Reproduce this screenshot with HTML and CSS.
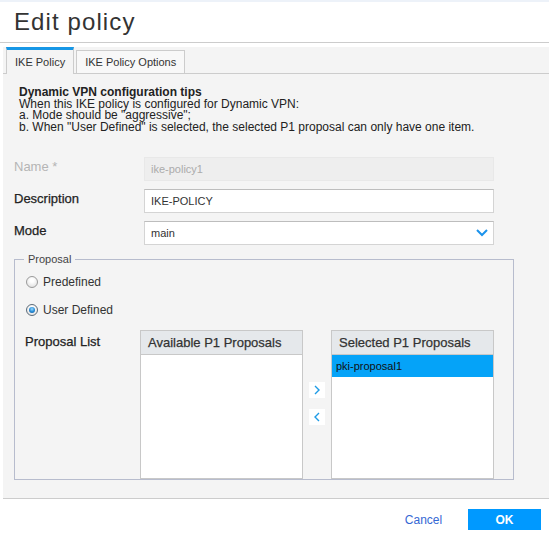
FILE: index.html
```html
<!DOCTYPE html>
<html lang="en">
<head>
    <meta charset="UTF-8">
    <meta name="viewport" content="width=device-width, initial-scale=1.0">
    <title>Edit policy</title>
    <link rel="stylesheet" href="styles.css">
</head>
<body>

    <div class="dialog-title">Edit policy</div>

    <div class="panel">
        <div class="tabs">
            <div class="tab active">IKE Policy</div>
            <div class="tab">IKE Policy Options</div>
        </div>

        <div class="panel-body">
            <div class="tips">
                <div class="tips-title">Dynamic VPN configuration tips</div>
                <div>When this IKE policy is configured for Dynamic VPN:</div>
                <div>a. Mode should be "aggressive";</div>
                <div>b. When "User Defined" is selected, the selected P1 proposal can only have one item.</div>
            </div>

            <div class="form-row disabled">
                <label>Name *</label>
                <input class="field" type="text" value="ike-policy1" disabled>
            </div>
            <div class="form-row">
                <label>Description</label>
                <input class="field" type="text" value="IKE-POLICY">
            </div>
            <div class="form-row">
                <label>Mode</label>
                <div class="field select">
                    <span>main</span>
                    <svg width="12" height="8" viewBox="0 0 12 8"><polyline points="1,1 6,6 11,1" fill="none" stroke="#1b93ec" stroke-width="2"/></svg>
                </div>
            </div>

            <fieldset class="proposal">
                <legend>Proposal</legend>
                <div class="radio-row"><span class="radio"></span>Predefined</div>
                <div class="radio-row"><span class="radio checked"></span>User Defined</div>

                <div class="list-row">
                    <div class="list-label">Proposal List</div>
                    <div class="list-box">
                        <div class="list-head">Available P1 Proposals</div>
                    </div>
                    <div class="list-arrows">
                        <span class="arrow-btn"><svg width="6" height="10" viewBox="0 0 6 10"><polyline points="1,1 5,5 1,9" fill="none" stroke="#1d9be6" stroke-width="1.4"/></svg></span>
                        <span class="arrow-btn"><svg width="6" height="10" viewBox="0 0 6 10"><polyline points="5,1 1,5 5,9" fill="none" stroke="#1d9be6" stroke-width="1.4"/></svg></span>
                    </div>
                    <div class="list-box">
                        <div class="list-head">Selected P1 Proposals</div>
                        <div class="list-item selected">pki-proposal1</div>
                    </div>
                </div>
            </fieldset>
        </div>
    </div>

    <div class="dialog-footer">
        <button class="btn btn-link">Cancel</button>
        <button class="btn btn-primary">OK</button>
    </div>

</body>
</html>
```

FILE: styles.css
```css
body {
    font-family: 'Liberation Sans', Arial, sans-serif;
    background-color: #ffffff;
    margin: 0;
    padding: 0;
    color: #333333;
}

.dialog-title {
    border-top: 2px solid #edf2f9; /* pale strip above the header */
    border-bottom: 1px solid #cccccc;
    padding: 6px 14px;
    font-size: 24px;
    line-height: 28px;
    letter-spacing: 1.1px;
    color: #333333;
}

.panel {
    margin: 4px 0 0 3px;
    background-color: #f4f4f4;
    border-bottom: 1px solid #cccccc;
}

/* tab strip */
.tabs {
    display: flex;
    align-items: flex-end;
    gap: 2px;
    height: 26px;
    padding-left: 3px;
    border-bottom: 1px solid #cccccc;
}

.tab {
    display: flex;
    align-items: center;
    box-sizing: border-box;
    height: 23px;
    padding: 0 8px;
    font-size: 11px;
    color: #333333;
    background-color: #f8f8f8;
    border: 1px solid #cccccc;
    border-bottom: none;
}

.tab.active {
    height: 27px;
    margin-bottom: -1px;
    background-color: #f4f4f4;
    border-top: 3px solid #1797e6;
}

.panel-body {
    padding: 13px 0 18px 11px;
}

.tips {
    margin: 0 0 24px 5px;
    font-size: 12px;
    line-height: 11.5px;
    color: #222222;
}

.tips-title {
    font-weight: bold;
}

/* label + input rows */
.form-row {
    display: flex;
    align-items: flex-start;
    margin-bottom: 8px;
}

.form-row label {
    width: 130px;
    font-size: 13px;
    line-height: 20px;
    color: #222222;
    -webkit-text-stroke: 0.25px #222222;
}

.field {
    box-sizing: border-box;
    width: 350px;
    height: 24px;
    margin: 0;
    padding: 0 6px;
    font-family: inherit;
    font-size: 11px;
    color: #333333;
    background-color: #ffffff;
    border: 1px solid #d4d4d4;
    border-top-color: #bdbdbd;
    border-radius: 0;
    outline: none;
}

.form-row.disabled label {
    color: #b5b5b5;
    -webkit-text-stroke: 0;
}

.form-row.disabled .field {
    color: #ababab;
    background-color: #eeeeee;
    border-color: #e8e8e8;
}

.select {
    display: flex;
    align-items: center;
    justify-content: space-between;
    padding-right: 5px;
}

/* proposal group */
.proposal {
    width: 500px;
    box-sizing: border-box;
    margin: 0;
    padding: 0 0 0 10px;
    border: 1px solid #b7bccd;
}

.proposal legend {
    padding: 0 4px;
    margin-left: -1px;
    font-size: 11px;
    line-height: 13px;
    color: #444444;
}

.radio-row {
    display: flex;
    align-items: center;
    height: 20px;
    margin-top: 8px;
    font-size: 12px;
    color: #333333;
}

.radio-row:first-of-type {
    margin-top: 6px;
}

.radio {
    position: relative;
    box-sizing: border-box;
    width: 12px;
    height: 12px;
    margin: 0 5px 0 1px;
    border: 1px solid #9a9a9a;
    border-radius: 50%;
    background: radial-gradient(circle at 50% 35%, #ffffff 20%, #d9d9d9 100%);
}

.radio.checked {
    border-color: #5c6b78;
}

.radio.checked::after {
    content: "";
    position: absolute;
    left: 2px;
    top: 2px;
    width: 6px;
    height: 6px;
    border-radius: 50%;
    background: radial-gradient(circle at 50% 35%, #9ad9ff 0%, #2a8fd8 50%, #0c4f93 100%);
}

.list-row {
    display: flex;
    margin-top: 10px;
}

.list-label {
    width: 115px;
    font-size: 13px;
    line-height: 23px;
    color: #222222;
    -webkit-text-stroke: 0.25px #222222;
}

.list-box {
    box-sizing: border-box;
    width: 163px;
    height: 149px;
    background-color: #ffffff;
    border: 1px solid #c8c8c8;
}

.list-head {
    height: 23px;
    padding-left: 7px;
    font-size: 13px;
    line-height: 23px;
    color: #333333;
    -webkit-text-stroke: 0.25px #333333;
    background-color: #e5e8eb;
    border-bottom: 1px solid #c8c8c8;
}

.list-item {
    height: 22px;
    padding-left: 4px;
    font-size: 11px;
    line-height: 22px;
    color: #111111;
}

.list-item.selected {
    background-color: #05a3f8;
}

.list-arrows {
    display: flex;
    flex-direction: column;
    align-items: center;
    gap: 11px;
    width: 28px;
    padding-top: 52px;
}

.arrow-btn {
    display: flex;
    align-items: center;
    justify-content: center;
    width: 16px;
    height: 16px;
    background-color: #ffffff;
}

/* footer buttons */
.dialog-footer {
    display: flex;
    justify-content: flex-end;
    gap: 8px;
    padding: 10px 8px 0 0;
}

.btn {
    width: 73px;
    height: 21px;
    margin: 0;
    padding: 0;
    border: none;
    font-family: inherit;
    font-size: 12px;
    cursor: pointer;
}

.btn-link {
    color: #3568d4;
    background-color: transparent;
}

.btn-primary {
    color: #ffffff;
    font-weight: bold;
    background-color: #0099ff;
}
```
